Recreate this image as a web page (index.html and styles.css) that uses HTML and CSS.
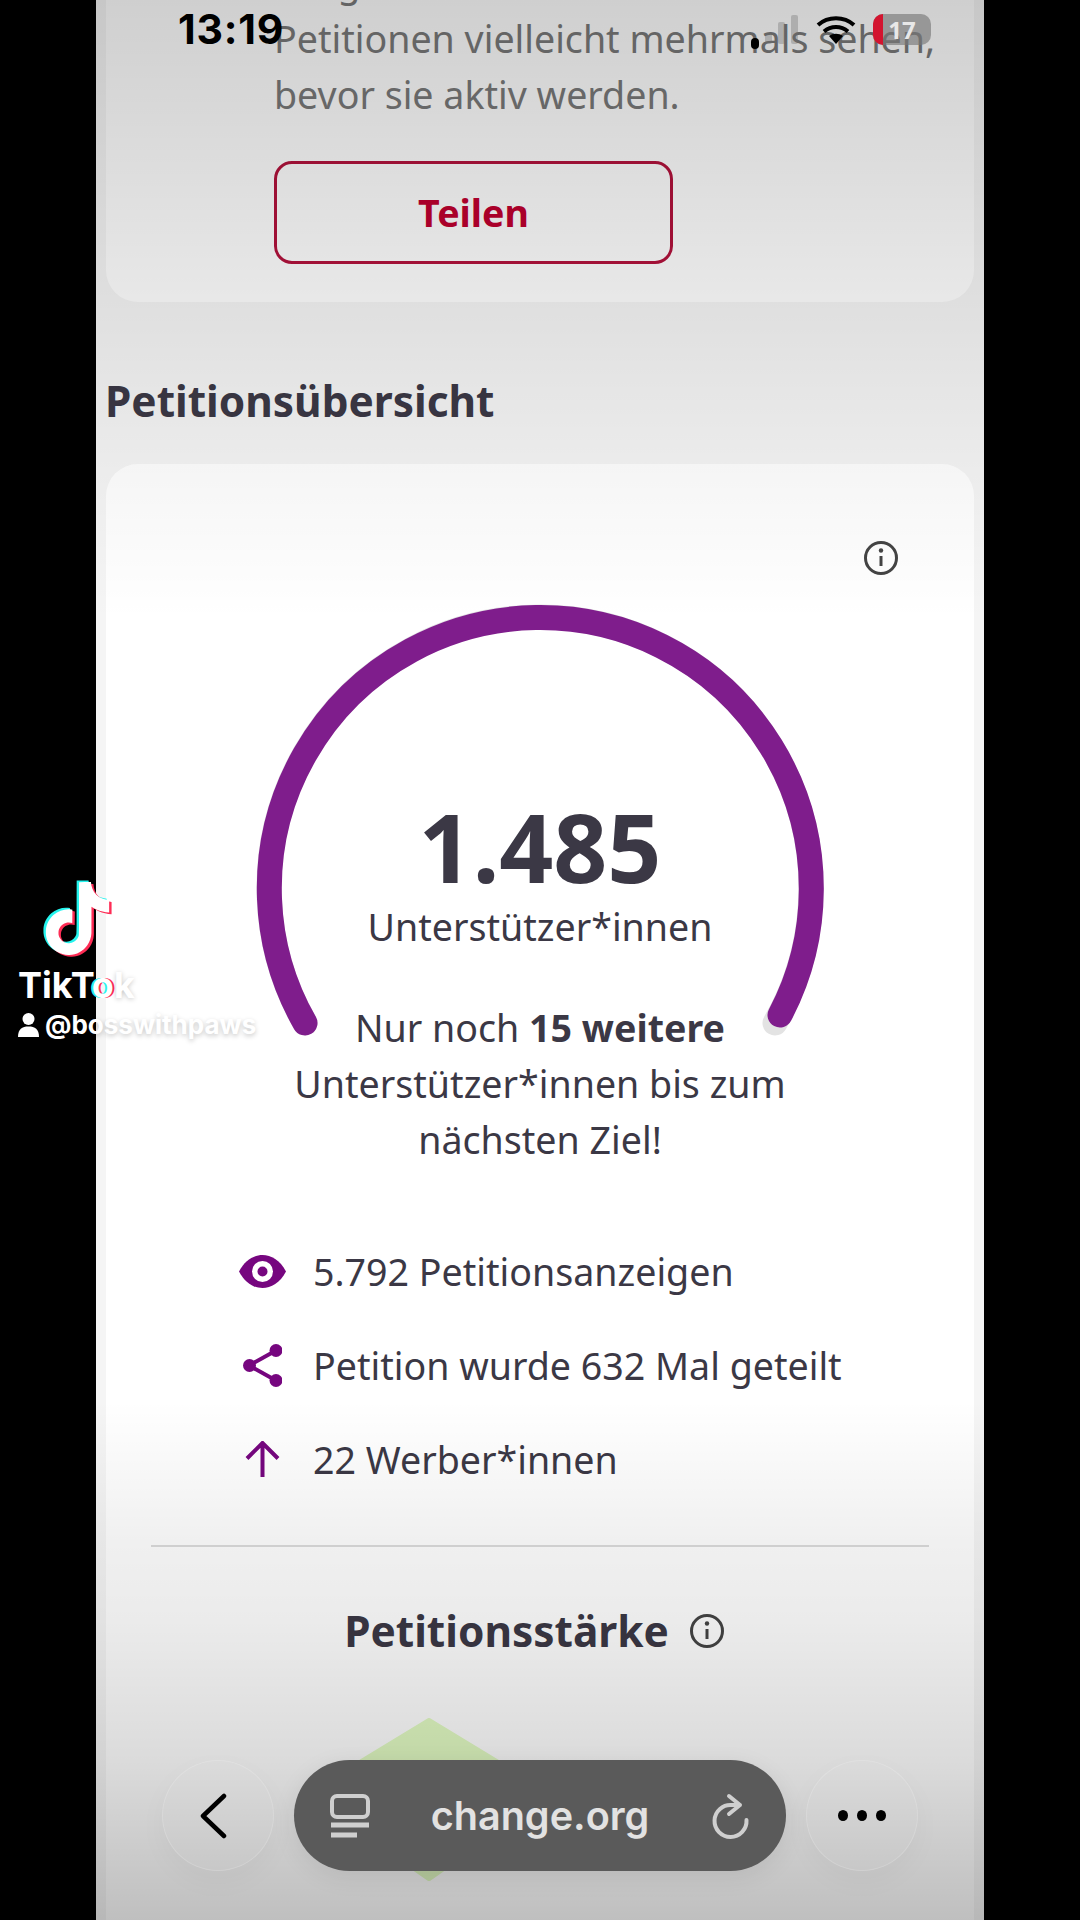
FILE: index.html
```html
<!DOCTYPE html>
<html lang="de">
  <head>
    <meta charset="utf-8">
    <meta name="viewport" content="width=device-width, initial-scale=1">
    <title>Petitionsübersicht - change.org</title>
    <link rel="stylesheet" href="styles.css">
  </head>
  <body>
    <div class="screen">
      <section class="card share-card">
        <p class="share-text">Einige<br>Petitionen vielleicht mehrmals sehen,<br>bevor sie aktiv werden.</p>
        <button class="share-button">Teilen</button>
      </section>

      <h2 class="section-title">Petitionsübersicht</h2>

      <section class="card overview-card">
        <div class="info-row">
          <svg class="info-icon" viewBox="0 0 34 34"><circle cx="17" cy="17" r="15.5"/><line x1="17" y1="15" x2="17" y2="25"/><circle class="info-dot" cx="17" cy="9.5" r="2.2"/></svg>
        </div>

        <div class="gauge">
          <svg class="gauge-arc" viewBox="0 0 600 440">
            <path class="gauge-track" d="M65 420A271 271 0 1 1 535 420"/>
            <path class="gauge-fill" d="M65 420A271 271 0 1 1 540 412"/>
          </svg>
          <div class="gauge-number">1.485</div>
          <div class="gauge-label">Unterstützer*innen</div>
          <p class="gauge-goal">Nur noch <b>15 weitere</b><br>Unterstützer*innen bis zum<br>nächsten Ziel!</p>
        </div>

        <ul class="stats">
          <li class="stat">
            <span class="stat-icon"><svg width="47" height="33" viewBox="0 0 47 33"><path class="fill-purple" d="M0 16.5C6 5 15 0 23.5 0S41 5 47 16.5C41 28 32 33 23.5 33S6 28 0 16.5Z"/><circle cx="23.5" cy="16.5" r="10.5" fill="#fff"/><circle class="fill-purple" cx="23.5" cy="16.5" r="5"/></svg></span>
            5.792 Petitionsanzeigen
          </li>
          <li class="stat">
            <span class="stat-icon"><svg width="39" height="43" viewBox="0 0 39 43"><path class="stroke-purple" d="M33 6.500L6 21.500L33 36.500"/><circle class="fill-purple" cx="33" cy="6.500" r="6.500"/><circle class="fill-purple" cx="6.500" cy="21.500" r="6.500"/><circle class="fill-purple" cx="33" cy="36.500" r="6.500"/></svg></span>
            Petition wurde 632 Mal geteilt
          </li>
          <li class="stat">
            <span class="stat-icon"><svg width="35" height="36" viewBox="0 0 35 36"><path class="stroke-purple" d="M17.500 36V2M2 17.500L17.500 2L33 17.500"/></svg></span>
            22 Werber*innen
          </li>
        </ul>

        <hr class="divider">

        <div class="strength-title">
          <h3>Petitionsstärke</h3>
          <svg class="info-icon" viewBox="0 0 34 34"><circle cx="17" cy="17" r="15.5"/><line x1="17" y1="15" x2="17" y2="25"/><circle class="info-dot" cx="17" cy="9.5" r="2.2"/></svg>
        </div>

        <svg class="strength-shape" viewBox="0 0 280 172"><path d="M140 3L260 76L140 160L20 76Z"/></svg>
      </section>

      <div class="shade"></div>

      <div class="status-bar">
        <span class="clock">13:19</span>
        <div class="status-icons">
          <span class="signal-dot"></span>
          <span class="signal"><i class="bar-1"></i><i class="bar-2"></i><i class="bar-3"></i></span>
          <svg class="wifi" viewBox="0 0 40 30"><path d="M2 10C12 1 28 1 38 10M8 16.500C15 10.500 25 10.500 32 16.500"/><path class="wifi-tip" d="M13 21C17 18 23 18 27 21L20 29Z"/></svg>
          <span class="battery"><span class="battery-level"></span><span class="battery-text">17</span></span>
        </div>
      </div>

      <nav class="browser-bar">
        <button class="round-button">
          <svg class="back-icon" viewBox="0 0 30 46"><path d="M26 3L5 23L26 43"/></svg>
        </button>
        <div class="url-pill">
          <svg class="tabs-icon" viewBox="0 0 40 46"><rect x="2" y="3" width="36" height="21" rx="5"/><path class="tabs-line" d="M1 32H39M1 42H27"/></svg>
          <span class="url-text">change.org</span>
          <svg class="reload-icon" viewBox="0 0 40 46"><path d="M30 12H22A16 16 0 1 0 36.500 27M19 3L30 12L19 21"/></svg>
        </div>
        <button class="round-button">
          <span class="dots"><i></i><i></i><i></i></span>
        </button>
      </nav>
    </div>

    <div class="watermark">
      <svg class="tt-logo" viewBox="-2 -2 28 28">
        <path class="tt-cyan" d="M12.525.02c1.31-.02 2.61-.01 3.91-.02.08 1.53.63 3.09 1.75 4.17 1.12 1.11 2.7 1.62 4.24 1.79v4.03c-1.44-.05-2.89-.35-4.2-.97-.57-.26-1.1-.59-1.62-.93-.01 2.92.01 5.84-.02 8.75-.08 1.4-.54 2.79-1.35 3.94-1.31 1.92-3.58 3.17-5.91 3.21-1.43.08-2.86-.31-4.08-1.03-2.02-1.19-3.44-3.37-3.65-5.71-.02-.5-.03-1-.01-1.49.18-1.9 1.12-3.72 2.58-4.96 1.66-1.44 3.98-2.13 6.15-1.72.02 1.48-.04 2.96-.04 4.44-.99-.32-2.15-.23-3.02.37-.63.41-1.11 1.04-1.36 1.75-.21.51-.15 1.07-.14 1.61.24 1.64 1.82 3.02 3.5 2.87 1.12-.01 2.19-.66 2.77-1.61.19-.33.4-.67.41-1.06.1-1.79.06-3.57.07-5.36.01-4.03-.01-8.05.02-12.07z"/>
        <path class="tt-red" d="M12.525.02c1.31-.02 2.61-.01 3.91-.02.08 1.53.63 3.09 1.75 4.17 1.12 1.11 2.7 1.62 4.24 1.79v4.03c-1.44-.05-2.89-.35-4.2-.97-.57-.26-1.1-.59-1.62-.93-.01 2.92.01 5.84-.02 8.75-.08 1.4-.54 2.79-1.35 3.94-1.31 1.92-3.58 3.17-5.91 3.21-1.43.08-2.86-.31-4.08-1.03-2.02-1.19-3.44-3.37-3.65-5.71-.02-.5-.03-1-.01-1.49.18-1.9 1.12-3.72 2.58-4.96 1.66-1.44 3.98-2.13 6.15-1.72.02 1.48-.04 2.96-.04 4.44-.99-.32-2.15-.23-3.02.37-.63.41-1.11 1.04-1.36 1.75-.21.51-.15 1.07-.14 1.61.24 1.64 1.82 3.02 3.5 2.87 1.12-.01 2.19-.66 2.77-1.61.19-.33.4-.67.41-1.06.1-1.79.06-3.57.07-5.36.01-4.03-.01-8.05.02-12.07z"/>
        <path class="tt-white" d="M12.525.02c1.31-.02 2.61-.01 3.91-.02.08 1.53.63 3.09 1.75 4.17 1.12 1.11 2.7 1.62 4.24 1.79v4.03c-1.44-.05-2.89-.35-4.2-.97-.57-.26-1.1-.59-1.62-.93-.01 2.92.01 5.84-.02 8.75-.08 1.4-.54 2.79-1.35 3.94-1.31 1.92-3.58 3.17-5.91 3.21-1.43.08-2.86-.31-4.08-1.03-2.02-1.19-3.44-3.37-3.65-5.71-.02-.5-.03-1-.01-1.49.18-1.9 1.12-3.72 2.58-4.96 1.66-1.44 3.98-2.13 6.15-1.72.02 1.48-.04 2.96-.04 4.44-.99-.32-2.15-.23-3.02.37-.63.41-1.11 1.04-1.36 1.75-.21.51-.15 1.07-.14 1.61.24 1.64 1.82 3.02 3.5 2.87 1.12-.01 2.19-.66 2.77-1.61.19-.33.4-.67.41-1.06.1-1.79.06-3.57.07-5.36.01-4.03-.01-8.05.02-12.07z"/>
      </svg>
      <div class="tt-name">TikT<span class="tt-o">o</span>k</div>
      <div class="tt-handle">
        <svg width="21" height="24" viewBox="0 0 21 24"><circle cx="10.500" cy="6" r="6"/><path d="M0 24C0 16 4 13.500 10.500 13.500S21 16 21 24Z"/></svg>
        <span>@bosswithpaws</span>
      </div>
    </div>
  </body>
</html>
```

FILE: styles.css
```css
* { box-sizing: border-box; }
html, body { margin: 0; padding: 0; }
body { position: relative; width: 1080px; height: 1920px; overflow: hidden; background: #000; font-family: "Noto Sans", sans-serif; color: #3b3845; }

.screen { position: relative; width: 888px; height: 1920px; margin: 0 auto; overflow: hidden; background: #f5f5f5; }

/* cards */
.card { margin: 0 10px; background: #fff; border-radius: 32px; }
.share-card { margin-top: -45px; padding: 0 0 38px 168px; border-radius: 0 0 32px 32px; }
.share-text { margin: 0; font-size: 37.6px; line-height: 56px; color: #7a7a7a; }
.share-button { display: block; width: 399px; height: 103px; margin-top: 38px; background: transparent; border: 3px solid #b3123c; border-radius: 18px; font-family: inherit; font-size: 37.6px; font-weight: 700; color: #c0002f; }

.section-title { margin: 71px 9px 35px; font-size: 42.4px; line-height: 56px; font-weight: 700; }
.overview-card { height: 1500px; }

.info-row { display: flex; justify-content: flex-end; padding: 77px 76px 0 0; }
.info-icon { display: block; width: 34px; height: 34px; fill: none; stroke: #444; stroke-width: 3; }
.info-dot { fill: #444; stroke: none; }

/* gauge */
.gauge { position: relative; margin-top: 28px; padding-top: 196px; text-align: center; }
.gauge-arc { position: absolute; top: 0; left: 134px; width: 600px; height: 440px; fill: none; stroke-width: 25; stroke-linecap: round; }
.gauge-track { stroke: #e3e3e3; }
.gauge-fill { stroke: #7f1d8c; }
.gauge-number { position: relative; font-size: 94.5px; line-height: 96px; font-weight: 700; }
.gauge-label { position: relative; margin-top: 4px; font-size: 37.6px; line-height: 56px; }
.gauge-goal { position: relative; margin: 45px 0 0; font-size: 37.6px; line-height: 56px; }

/* stats */
.stats { list-style: none; margin: 56px 0 0 132px; padding: 0; }
.stat { display: flex; align-items: center; gap: 27px; height: 94px; font-size: 37.6px; }
.stat-icon { display: flex; justify-content: center; width: 48px; }
.stat-icon svg { display: block; }
.fill-purple { fill: #76067f; }
.stroke-purple { fill: none; stroke: #76067f; stroke-width: 4; }

.divider { height: 2px; margin: 39px 45px 0; border: 0; background: #dcdcdc; }

.strength-title { display: flex; justify-content: center; align-items: center; gap: 21px; margin-top: 56px; padding-right: 12px; }
.strength-title h3 { margin: 0; font-size: 42.4px; line-height: 56px; font-weight: 700; }
.strength-shape { display: block; width: 280px; height: 172px; margin: 59px 0 0 183px; fill: #e3fcc4; stroke: #e3fcc4; stroke-width: 6; stroke-linejoin: round; }

/* video overlay darkening top and bottom */
.shade { position: absolute; inset: 0; pointer-events: none; background: linear-gradient(to bottom, rgba(0,0,0,.19) 0, rgba(0,0,0,.09) 300px, rgba(0,0,0,.04) 465px, rgba(0,0,0,0) 620px, rgba(0,0,0,0) 1400px, rgba(0,0,0,.06) 1540px, rgba(0,0,0,.08) 1620px, rgba(0,0,0,.14) 1760px, rgba(0,0,0,.25) 1920px); }

/* status bar */
.status-bar { position: absolute; top: 0; left: 0; right: 0; display: flex; justify-content: space-between; align-items: flex-start; padding: 5px 53px 0 82px; }
.clock { font-family: Inter, sans-serif; font-size: 41px; line-height: 48px; font-weight: 700; letter-spacing: .8px; color: #000; }
.status-icons { display: flex; align-items: flex-start; padding-top: 8px; }
.signal-dot { width: 8px; height: 11px; margin: 25px 6px 0 0; border-radius: 4px; background: #000; }
.signal { display: flex; align-items: flex-end; gap: 6px; height: 29px; margin-top: 2px; }
.signal i { display: block; width: 7px; background: rgba(110,110,110,.35); border-radius: 2px; }
.bar-1 { height: 11px; }
.bar-2 { height: 22px; }
.bar-3 { height: 29px; }
.wifi { width: 40px; height: 30px; margin: 2px 17px 0 18px; fill: none; stroke: #000; stroke-width: 4; }
.wifi-tip { fill: #000; stroke: none; }
.battery { position: relative; display: flex; justify-content: center; align-items: center; width: 58px; height: 31px; margin-top: 1px; border-radius: 10px; overflow: hidden; background: rgba(120,120,120,.65); }
.battery-level { position: absolute; top: 0; bottom: 0; left: 0; width: 10px; background: #d3142f; }
.battery-text { position: relative; font-size: 24px; font-weight: 700; color: #e8e8e8; }

/* browser bar */
.browser-bar { position: absolute; top: 1760px; left: 66px; display: flex; gap: 20px; }
.round-button { display: flex; justify-content: center; align-items: center; width: 112px; height: 111px; padding: 0; background: transparent; border: 1.5px solid rgba(255,255,255,.16); border-radius: 50%; box-shadow: 0 10px 30px rgba(0,0,0,.03); }
.back-icon { width: 30px; height: 46px; margin-right: 10px; fill: none; stroke: #000; stroke-width: 4.5; stroke-linecap: round; stroke-linejoin: round; }
.dots { display: flex; gap: 9px; }
.dots i { display: block; width: 10px; height: 11px; border-radius: 50%; background: #000; }
.url-pill { display: flex; justify-content: space-between; align-items: center; width: 492px; height: 111px; padding: 0 36px; background: #5a5a5a; border-radius: 56px; box-shadow: 0 6px 24px rgba(0,0,0,.08); }
.tabs-icon { width: 40px; height: 46px; fill: none; stroke: #cfcfcf; stroke-width: 4; }
.tabs-line { stroke-width: 5; }
.url-text { font-family: Inter, sans-serif; font-size: 39.6px; font-weight: 600; color: #e2e2e2; }
.reload-icon { width: 40px; height: 46px; fill: none; stroke: #cfcfcf; stroke-width: 4; stroke-linecap: round; stroke-linejoin: round; }

/* tiktok watermark */
.watermark { position: absolute; top: 876px; left: 18px; color: #fff; }
.tt-logo { display: block; width: 85px; height: 85px; margin-left: 17px; }
.tt-cyan { fill: #25f4ee; transform: translate(-.8px, -.5px); }
.tt-red { fill: #fe2c55; transform: translate(.8px, .6px); }
.tt-white { fill: #fff; }
.tt-name { margin-top: 4px; font-family: Inter, sans-serif; font-size: 36px; line-height: 40px; font-weight: 700; color: #fff; text-shadow: 0 1px 5px rgba(0,0,0,.22); }
.tt-o { text-shadow: -2px 0 0 #25f4ee, 2px 0 0 #fe2c55; }
.tt-handle { display: flex; align-items: center; gap: 6px; margin-top: 2px; font-family: Inter, sans-serif; font-size: 26px; line-height: 36px; font-weight: 700; text-shadow: 0 2px 5px rgba(0,0,0,.22); }
.tt-handle svg { display: block; fill: #fff; }
```
